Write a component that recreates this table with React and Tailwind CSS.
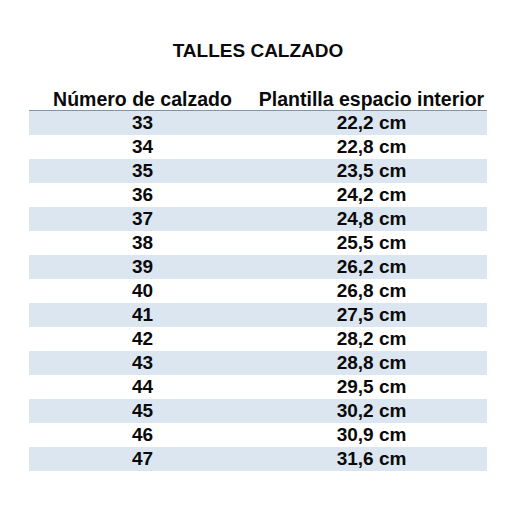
const rows = [
  ["33", "22,2 cm"],
  ["34", "22,8 cm"],
  ["35", "23,5 cm"],
  ["36", "24,2 cm"],
  ["37", "24,8 cm"],
  ["38", "25,5 cm"],
  ["39", "26,2 cm"],
  ["40", "26,8 cm"],
  ["41", "27,5 cm"],
  ["42", "28,2 cm"],
  ["43", "28,8 cm"],
  ["44", "29,5 cm"],
  ["45", "30,2 cm"],
  ["46", "30,9 cm"],
  ["47", "31,6 cm"],
];

const App = () => {
  return (
    <div
      className="w-[509px] h-[517px] bg-white pt-[40px] text-[#0a0a0a] font-bold text-[19px]"
      style={{ fontFamily: '"Liberation Sans", Arial, sans-serif' }}
    >
      <div className="ml-[29px] w-[458px]">
        <h1 className="text-center leading-[22px]">TALLES CALZADO</h1>

        <div className="mt-[26px] flex h-[23px] leading-[22px] text-[19.5px] border-b border-[#7f95ad]">
          <div className="w-[227px] text-center">Número de calzado</div>
          <div className="w-[231px] text-center whitespace-nowrap">Plantilla espacio interior</div>
        </div>

        {rows.map(([size, length], i) => (
          <div
            key={size}
            className={`flex h-[24px] leading-[24px] ${i % 2 === 0 ? "bg-[#dce6f1]" : "bg-white"}`}
          >
            <div className="w-[227px] text-center">{size}</div>
            <div className="w-[231px] text-center">{length}</div>
          </div>
        ))}
      </div>
    </div>
  );
};

export default App;
